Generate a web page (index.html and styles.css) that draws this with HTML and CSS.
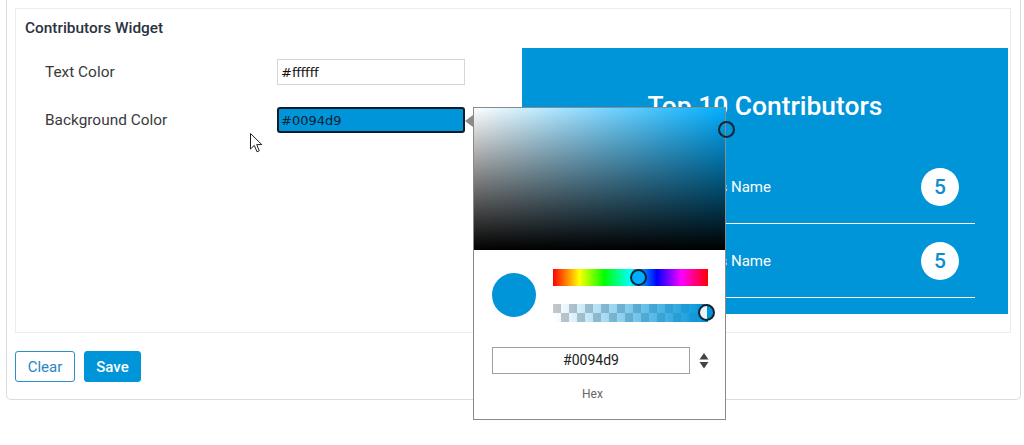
FILE: index.html
```html
<!DOCTYPE html>
<html>
<head>
<meta charset="utf-8">
<link rel="stylesheet" href="styles.css">
</head>
<body>
<div class="card">
  <div class="panel">
    <div class="panel-title">Contributors Widget</div>
    <div class="panel-body">
      <div class="fields">
        <div class="field">
          <label class="field-label">Text Color</label>
          <div class="field-control">
            <input class="color-input" type="text" value="#ffffff">
          </div>
        </div>
        <div class="field">
          <label class="field-label">Background Color</label>
          <div class="field-control">
            <input class="color-input color-input--active" type="text" value="#0094d9">
            <div class="picker">
              <span class="picker-arrow"></span>
              <div class="sat">
                <span class="sat-knob"></span>
              </div>
              <div class="picker-controls">
                <span class="swatch"></span>
                <div class="sliders">
                  <div class="hue"><span class="knob hue-knob"></span></div>
                  <div class="alpha"><div class="alpha-fill"></div><span class="knob alpha-knob"></span></div>
                </div>
              </div>
              <div class="hex-row">
                <div class="hex-input">#0094d9</div>
                <svg class="hex-toggle" width="10" height="18" viewBox="0 0 10 18"><path d="M5 1 L9.5 7.5 H0.5 Z M0.5 10 H9.5 L5 16.5 Z" fill="#444"/></svg>
              </div>
              <div class="hex-label">Hex</div>
            </div>
          </div>
        </div>
        <svg class="cursor" width="13" height="20" viewBox="0 0 13 20"><path d="M0.5 0.5 V16 L4.3 12.4 L7 18.8 L9.3 17.8 L6.7 11.6 H11.8 Z" fill="#fff" stroke="#222" stroke-width="1" stroke-linejoin="round"/></svg>
      </div>
      <div class="preview">
        <div class="preview-title">Top 10 Contributors</div>
        <ul class="contrib-list">
          <li class="contrib"><span class="contrib-name">Contributor's Name</span><span class="contrib-count">5</span></li>
          <li class="contrib"><span class="contrib-name">Contributor's Name</span><span class="contrib-count">5</span></li>
        </ul>
      </div>
    </div>
  </div>
  <div class="actions">
    <button class="btn btn-outline">Clear</button>
    <button class="btn btn-primary">Save</button>
  </div>
</div>
</body>
</html>
```

FILE: styles.css
```css
* { box-sizing: border-box; }
html, body { margin: 0; padding: 0; background: #fff; }
body {
  min-height: 445px;
  font-family: Roboto, "Liberation Sans", Arial, sans-serif;
  color: #333;
  font-size: 14px;
}
.card {
  margin-left: 6px;
  width: 1015px;
  border: 1px solid #dcdcdc;
  border-top: none;
  border-radius: 0 0 5px 5px;
  padding: 8px 9px 17px 8px;
}
.panel {
  border: 1px solid #ececec;
  padding: 9px 2px 18px 9px;
}
.panel-title {
  font-weight: 500;
  font-size: 15.4px;
  line-height: 20px;
  color: #2b3240;
}
.panel-body {
  display: flex;
  margin-top: 10px;
}
.fields {
  flex: 1;
  position: relative;
  padding-top: 11px;
  display: flex;
  flex-direction: column;
  gap: 22px;
}
.field {
  display: flex;
  align-items: center;
  height: 26px;
}
.field-label {
  width: 252px;
  padding-left: 20px;
  color: #3a3a3a;
  font-size: 15.4px;
}
.field-control {
  position: relative;
  width: 188px;
  height: 26px;
}
.color-input {
  width: 188px;
  height: 26px;
  margin: 0;
  border: 1px solid #d6d6d6;
  padding: 0 3px;
  font-family: "DejaVu Sans", sans-serif;
  font-size: 13px;
  color: #111;
  background: #fff;
  outline: none;
}
.color-input--active {
  background: #0094d9;
  border: 2px solid #0c1d29;
  border-radius: 3px;
  padding: 0 2px;
  color: #0b2233;
}
.cursor {
  position: absolute;
  left: 225px;
  top: 85px;
}
.picker {
  position: absolute;
  left: 196px;
  top: 0;
  width: 253px;
  height: 313px;
  border: 1px solid #8a8a8a;
  background: #fff;
  z-index: 5;
}
.picker-arrow {
  position: absolute;
  left: -9px;
  top: 7px;
  width: 0;
  height: 0;
  border-top: 6px solid transparent;
  border-bottom: 6px solid transparent;
  border-right: 8px solid #8a8a8a;
}
.sat {
  position: relative;
  height: 142px;
  background:
    linear-gradient(to bottom, rgba(0,0,0,0), #000),
    linear-gradient(to right, #fff, rgba(255,255,255,0)),
    hsl(199, 100%, 50%);
}
.sat-knob {
  position: absolute;
  left: 244px;
  top: 13px;
  width: 17px;
  height: 17px;
  border: 2px solid #14232f;
  border-radius: 50%;
}
.picker-controls {
  display: flex;
  align-items: center;
  padding: 17px 0 0 18px;
}
.swatch {
  width: 44px;
  height: 44px;
  border-radius: 50%;
  background: #0094d9;
  flex: none;
}
.sliders {
  margin-left: 17px;
  display: flex;
  flex-direction: column;
  gap: 18px;
  padding-top: 2px;
}
.hue, .alpha {
  position: relative;
  width: 155px;
  height: 17px;
}
.hue {
  background: linear-gradient(to right, #f00 0%, #ff0 17%, #0f0 33%, #0ff 50%, #00f 67%, #f0f 83%, #f00 100%);
}
.alpha {
  height: 18px;
  background: repeating-conic-gradient(#fff 0 25%, #c4c7ca 0 50%) 0 0 / 16px 18px;
}
.alpha-fill {
  position: absolute;
  inset: 0;
  background: linear-gradient(to right, rgba(0,148,217,0), rgba(0,148,217,1));
}
.knob {
  position: absolute;
  width: 17px;
  height: 17px;
  border: 2px solid #14232f;
  border-radius: 50%;
}
.hue-knob {
  left: 77px;
  top: 0;
  background: hsl(199, 100%, 50%);
}
.alpha-knob {
  left: 145px;
  top: 0;
  background: linear-gradient(to right, #eaf4fa 50%, #0094d9 50%);
}
.hex-row {
  display: flex;
  align-items: center;
  padding: 25px 0 0 18px;
}
.hex-input {
  width: 198px;
  height: 27px;
  border: 1px solid #a0a0a0;
  text-align: center;
  line-height: 25px;
  font-size: 14px;
  color: #222;
}
.hex-toggle {
  margin-left: 9px;
}
.hex-label {
  text-align: center;
  margin-top: 13px;
  font-size: 12px;
  color: #666;
  padding-right: 14px;
}
.preview {
  width: 486px;
  height: 266px;
  background: #0094d9;
  color: #fff;
  padding-top: 43px;
}
.preview-title {
  text-align: center;
  font-size: 26.4px;
  font-weight: 500;
  line-height: 30px;
}
.contrib-list {
  list-style: none;
  margin: 29px 0 0;
  padding: 0 33px;
}
.contrib {
  display: flex;
  align-items: center;
  padding: 18px 0 17px;
  border-bottom: 1px solid #fff;
}
.contrib-name {
  flex: 1;
  padding-left: 87px;
  font-size: 15px;
}
.contrib-count {
  width: 38px;
  height: 38px;
  border-radius: 50%;
  background: #fff;
  color: #0a8fd0;
  font-size: 21px;
  font-weight: 500;
  display: flex;
  align-items: center;
  justify-content: center;
  margin-right: 16px;
}
.actions {
  display: flex;
  gap: 9px;
  margin-top: 18px;
}
.btn {
  height: 31px;
  font-family: Roboto, "Liberation Sans", Arial, sans-serif;
  font-size: 15px;
  border-radius: 3px;
  padding: 0;
  cursor: pointer;
}
.btn-outline {
  width: 60px;
  background: #fff;
  border: 1px solid #2a90cc;
  color: #2a86c2;
}
.btn-primary {
  width: 57px;
  background: #0094d9;
  border: 1px solid #0094d9;
  color: #fff;
  font-weight: 500;
}
```
